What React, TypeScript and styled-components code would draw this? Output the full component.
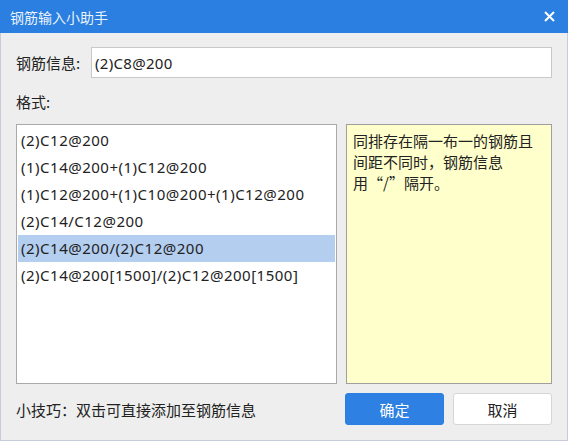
import styled, { createGlobalStyle } from "styled-components";

const GlobalStyle = createGlobalStyle`
  html, body {
    margin: 0;
    padding: 0;
    background: #ffffff;
  }

  * {
    box-sizing: border-box;
  }
`;

const FORMATS = [
  "(2)C12@200",
  "(1)C14@200+(1)C12@200",
  "(1)C12@200+(1)C10@200+(1)C12@200",
  "(2)C14/C12@200",
  "(2)C14@200/(2)C12@200",
  "(2)C14@200[1500]/(2)C12@200[1500]",
];

const NOTE_LINES = ["同排存在隔一布一的钢筋且", "间距不同时，钢筋信息", "用“/”隔开。"];

function App() {
  const selected = 4;

  return (
    <>
      <GlobalStyle />
      <Dialog>
        <TitleBar>
          <Title>钢筋输入小助手</Title>
          <CloseButton aria-label="关闭">
            <svg width="11" height="11" viewBox="0 0 11 11">
              <path d="M1 1L10 10M10 1L1 10" stroke="#ffffff" strokeWidth="2" />
            </svg>
          </CloseButton>
        </TitleBar>

        <Body>
          <InfoRow>
            <Label>钢筋信息:</Label>
            <Input defaultValue="(2)C8@200" />
          </InfoRow>

          <SectionLabel>格式:</SectionLabel>

          <Panels>
            <FormatList>
              {FORMATS.map((f, i) => (
                <FormatItem key={f} $active={i === selected}>
                  {f}
                </FormatItem>
              ))}
            </FormatList>
            <Note>
              {NOTE_LINES.map((line) => (
                <NoteLine key={line}>{line}</NoteLine>
              ))}
            </Note>
          </Panels>

          <Footer>
            <Tip>小技巧：双击可直接添加至钢筋信息</Tip>
            <Buttons>
              <Button $primary>确定</Button>
              <Button>取消</Button>
            </Buttons>
          </Footer>
        </Body>
      </Dialog>
    </>
  );
}

const Dialog = styled.div`
  width: 568px;
  height: 441px;
  display: flex;
  flex-direction: column;

  font-family: "Noto Sans", "Noto Sans CJK SC", sans-serif;
  color: #222222;
`;

const TitleBar = styled.div`
  height: 33px;
  flex: none;
  display: flex;
  align-items: center;
  justify-content: space-between;

  background: #2b7fe0;
  padding: 0 12px 0 10px;
`;

const Title = styled.span`
  font-family: "Noto Sans CJK SC", sans-serif;
  font-size: 14px;
  color: rgba(255, 255, 255, 0.92);
`;

const CloseButton = styled.button`
  display: flex;
  align-items: center;
  justify-content: center;
  border: none;
  background: transparent;
  padding: 0;
  width: 14px;
  height: 14px;
`;

const Body = styled.div`
  flex: 1;
  display: flex;
  flex-direction: column;

  background: #eeeeee;
  border: 1px solid #c6cdd8;
  border-top: none;
  padding: 14px 15px 0;
`;

const InfoRow = styled.div`
  display: flex;
  align-items: center;
  height: 31px;
`;

const Label = styled.span`
  width: 75px;
  flex: none;
  font-family: "Noto Sans CJK SC", sans-serif;
  font-size: 15px;
`;

const Input = styled.input`
  flex: 1;
  height: 31px;
  border: 1px solid #c9c9c9;
  background: #ffffff;
  padding: 0 3px;
  outline: none;

  font-family: "Noto Sans", "Noto Sans CJK SC", sans-serif;
  font-size: 15px;
  letter-spacing: 0.3px;
  color: #222222;
`;

const SectionLabel = styled.div`
  margin-top: 14px;
  height: 32px;
  font-family: "Noto Sans CJK SC", sans-serif;
  font-size: 15px;
  line-height: 20px;
`;

const Panels = styled.div`
  display: flex;
  gap: 9px;
  height: 260px;
`;

const FormatList = styled.div`
  width: 321px;
  flex: none;
  background: #ffffff;
  border: 1px solid #a9a9a9;
  padding: 2px 1px 0;
`;

const FormatItem = styled.div<{ $active?: boolean }>`
  height: 27px;
  line-height: 27px;
  padding-left: 3px;
  font-size: 15px;
  letter-spacing: 0.5px;
  white-space: nowrap;
  background: ${({ $active }) => ($active ? "#b4cef0" : "transparent")};
`;

const Note = styled.div`
  flex: 1;
  background: #ffffcc;
  border: 1px solid #9f9f9f;
  padding: 5px 6px;

  font-family: "Noto Sans CJK SC", sans-serif;
  font-size: 15px;
  line-height: 21px;
`;

const NoteLine = styled.div``;

const Footer = styled.div`
  flex: 1;
  display: flex;
  align-items: center;
  justify-content: space-between;
  padding-bottom: 6px;
`;

const Tip = styled.span`
  font-family: "Noto Sans CJK SC", sans-serif;
  font-size: 15px;
`;

const Buttons = styled.div`
  display: flex;
  gap: 9px;
`;

const Button = styled.button<{ $primary?: boolean }>`
  width: 99px;
  height: 32px;
  border-radius: 3px;
  border: 1px solid ${({ $primary }) => ($primary ? "#2b7fe0" : "#d6d6d6")};
  background: ${({ $primary }) => ($primary ? "#2e80e2" : "#ffffff")};
  color: ${({ $primary }) => ($primary ? "#ffffff" : "#222222")};

  font-family: "Noto Sans CJK SC", sans-serif;
  font-size: 15px;
`;

export default App;
